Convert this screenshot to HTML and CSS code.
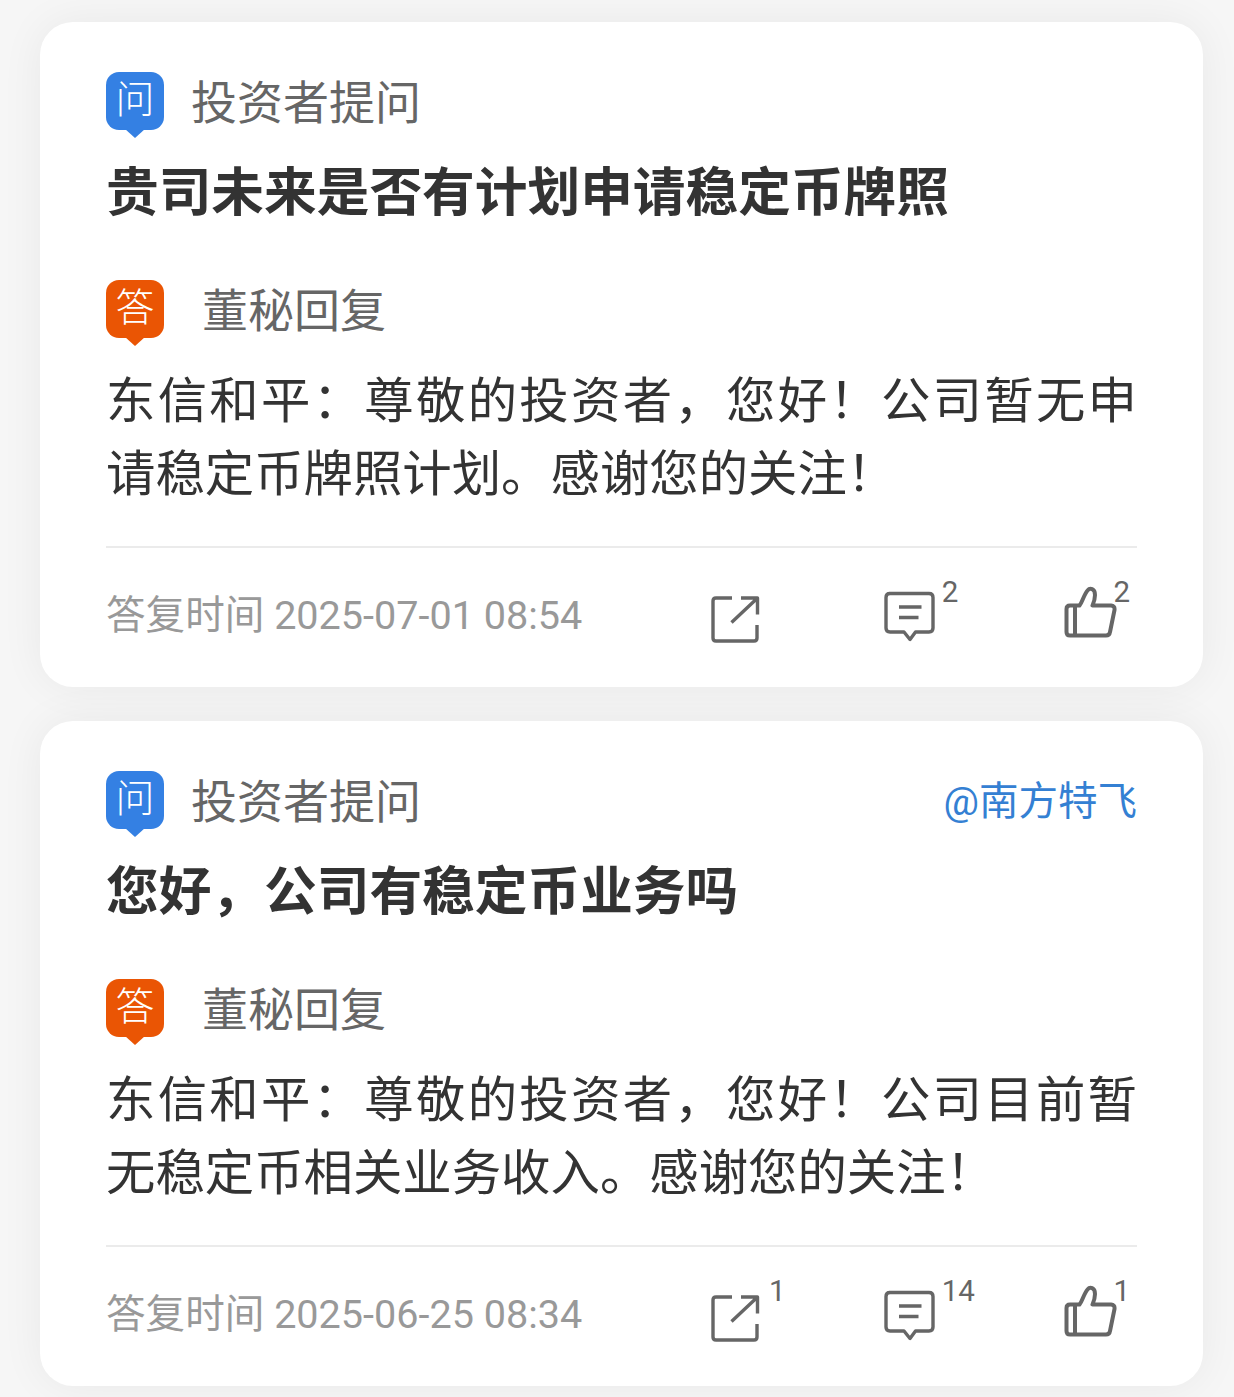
FILE: index.html
```
<!DOCTYPE html>
<html lang="zh-CN">
<head>
    <meta charset="UTF-8">
    <meta name="viewport" content="width=device-width, initial-scale=1.0">
    <title>投资者问答</title>
    <link rel="stylesheet" href="styles.css">
</head>
<body>
    <svg class="sprite" width="0" height="0">
        <symbol id="icon-share" viewBox="0 0 52 52">
            <path d="M22 4H6Q3 4 3 7V44Q3 47 6 47H44Q47 47 47 44V31"/>
            <path d="M31 4H47.5V20.500M47 4.500L21.500 28.500"/>
        </symbol>
        <symbol id="icon-comment" viewBox="0 0 52 52">
            <path d="M5 2.500H45Q49 2.500 49 6.500V37Q49 41 45 41H31.500L26 48.500L20 41H6Q2 41 2 37V6.500Q2 2.500 6 2.500Z"/>
            <path d="M15 16H37.500M15 26.500H34.500"/>
        </symbol>
        <symbol id="icon-like" viewBox="0 0 54 54">
            <path d="M6 19.500H15.500C18 17 20 8.500 23.500 4.500C26 1.500 31 2.500 31 9C31 13 30 16 28.500 19.500H47Q51 20 50.500 24L46 46Q45.500 49.500 42 49.500H6Q2.500 49.500 2.500 46V23Q2.500 19.500 6 19.500ZM11 19.500V49.500"/>
        </symbol>
    </svg>

    <div class="card">
        <div class="row">
            <span class="badge ask">问</span>
            <span class="label">投资者提问</span>
        </div>
        <h2>贵司未来是否有计划申请稳定币牌照</h2>
        <div class="row">
            <span class="badge answer">答</span>
            <span class="label reply">董秘回复</span>
        </div>
        <p>东信和平：尊敬的投资者，您好！公司暂无申请稳定币牌照计划。感谢您的关注！</p>
        <div class="footer">
            <span class="time">答复时间 2025-07-01 08:54</span>
            <span class="action share"><svg><use href="#icon-share"/></svg></span>
            <span class="action comment"><svg><use href="#icon-comment"/></svg><sup>2</sup></span>
            <span class="action like"><svg><use href="#icon-like"/></svg><sup>2</sup></span>
        </div>
    </div>

    <div class="card">
        <div class="row">
            <span class="badge ask">问</span>
            <span class="label">投资者提问</span>
            <a class="user">@南方特飞</a>
        </div>
        <h2>您好，公司有稳定币业务吗</h2>
        <div class="row">
            <span class="badge answer">答</span>
            <span class="label reply">董秘回复</span>
        </div>
        <p>东信和平：尊敬的投资者，您好！公司目前暂无稳定币相关业务收入。感谢您的关注！</p>
        <div class="footer">
            <span class="time">答复时间 2025-06-25 08:34</span>
            <span class="action share"><svg><use href="#icon-share"/></svg><sup>1</sup></span>
            <span class="action comment"><svg><use href="#icon-comment"/></svg><sup>14</sup></span>
            <span class="action like"><svg><use href="#icon-like"/></svg><sup>1</sup></span>
        </div>
    </div>
</body>
</html>
```
FILE: styles.css
```
* {
    box-sizing: border-box;
}
body {
    margin: 0;
    padding: 22px 31px 11px 40px;
    height: 1397px;
    overflow: hidden;
    background-color: #f6f6f6;
    color: #333;
    font-family: Roboto, "Noto Sans CJK SC", sans-serif;
    display: flex;
    flex-direction: column;
    gap: 34px;
}
.sprite {
    position: absolute;
}
.card {
    height: 665px;
    padding: 50px 66px 0;
    background-color: #fff;
    border-radius: 33px;
    box-shadow: 0 0 44px rgba(0, 0, 0, 0.06);
}
.row {
    display: flex;
    align-items: flex-start;
    height: 65px;
}
.badge {
    position: relative;
    width: 58px;
    height: 58px;
    border-radius: 13px;
    color: #fff;
    font-size: 39px;
    font-weight: 300;
    line-height: 57px;
    text-align: center;
}
/* pointer under the badge */
.badge::after {
    content: "";
    position: absolute;
    left: 19px;
    top: 57px;
    border: 10px solid transparent;
    border-top: 9px solid;
    border-bottom: 0;
}
.ask {
    background-color: #3480e3;
}
.ask::after {
    border-top-color: #3480e3;
}
.answer {
    background-color: #ea5504;
}
.answer::after {
    border-top-color: #ea5504;
}
.label {
    margin-left: 27px;
    color: #666;
    font-size: 46px;
    line-height: 62px;
}
.reply {
    margin-left: 38px;
}
.user {
    margin-left: auto;
    color: #3480d3;
    font-size: 39.5px;
    line-height: 62px;
}
h2 {
    margin: 20px 0 50px;
    height: 73px;
    font-size: 52.7px;
    line-height: 73px;
    font-weight: 700;
}
p {
    margin: 20px 0 35px;
    height: 146px;
    font-size: 49.4px;
    line-height: 73px;
    text-align: justify;
}
.footer {
    display: flex;
    height: 140px;
    border-top: 2px solid #ebebeb;
    color: #666;
}
.time {
    width: 608px;
    color: #999;
    font-size: 39.6px;
    line-height: 136px;
    white-space: nowrap;
}
.action {
    display: flex;
    width: 175px;
    padding-top: 43px;
}
.action svg {
    width: 52px;
    height: 52px;
    flex: none;
    fill: none;
    stroke: #666;
    stroke-width: 3.4;
    stroke-linecap: butt;
    stroke-linejoin: round;
}
.action sup {
    margin: -15px 0 0 6px;
    font-size: 29.5px;
    line-height: 32px;
}
.share svg {
    margin-top: 3px;
}
.share sup {
    margin-left: 7px;
}
.like {
    width: 74px;
    margin-left: 6px;
}
.like svg {
    width: 54px;
    height: 54px;
    margin-top: -5px;
    stroke-width: 4;
}
.like sup {
    margin-left: -4px;
}
```
